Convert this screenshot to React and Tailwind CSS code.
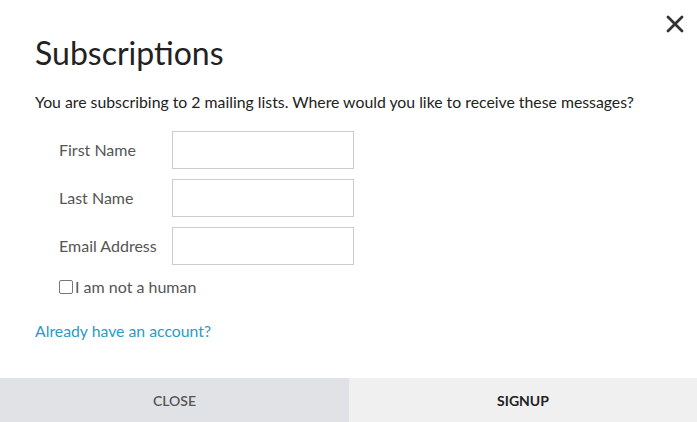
import { X } from 'lucide-react';

const fields = ['First Name', 'Last Name', 'Email Address'];

export default function App() {
  return (
    <div className="relative w-[697px] h-[422px] bg-white flex flex-col font-['Lato',sans-serif] text-[#333]">
      <button className="absolute top-[10px] right-[8px] w-[28px] h-[28px] flex items-center justify-center text-[#333]">
        <X className="w-[30px] h-[30px]" strokeWidth={2.4} />
      </button>

      <div className="flex-1 px-[35px] pt-[34px]">
        <h2 className="text-[32px] leading-[38px] text-[#222]">Subscriptions</h2>
        <p className="mt-[19px] text-[15.8px] leading-[22px] text-[#222] whitespace-nowrap">
          You are subscribing to 2 mailing lists. Where would you like to receive these messages?
        </p>

        <div className="mt-[18px] pl-[24px] flex flex-col gap-[10px]">
          {fields.map((f) => (
            <div key={f} className="flex items-center">
              <label className="w-[113px] text-[16px] text-[#555]">{f}</label>
              <input className="w-[182px] h-[38px] border border-[#ccc] bg-white outline-none" />
            </div>
          ))}
          <label className="flex items-center text-[16px] text-[#555]">
            <span className="w-[14px] h-[14px] border border-[#777] rounded-[2px] mr-[2px]" />
            I am not a human
          </label>
        </div>

        <a className="block mt-[20px] text-[15.8px] text-[#2b9bbf]">Already have an account?</a>
      </div>

      <div className="flex h-[44px] text-[14px]">
        <button className="w-[349px] bg-[#e1e2e6] text-[#555] uppercase font-semibold">Close</button>
        <button className="flex-1 bg-[#f0f0f0] text-[#222] uppercase font-bold">Signup</button>
      </div>
    </div>
  );
}
